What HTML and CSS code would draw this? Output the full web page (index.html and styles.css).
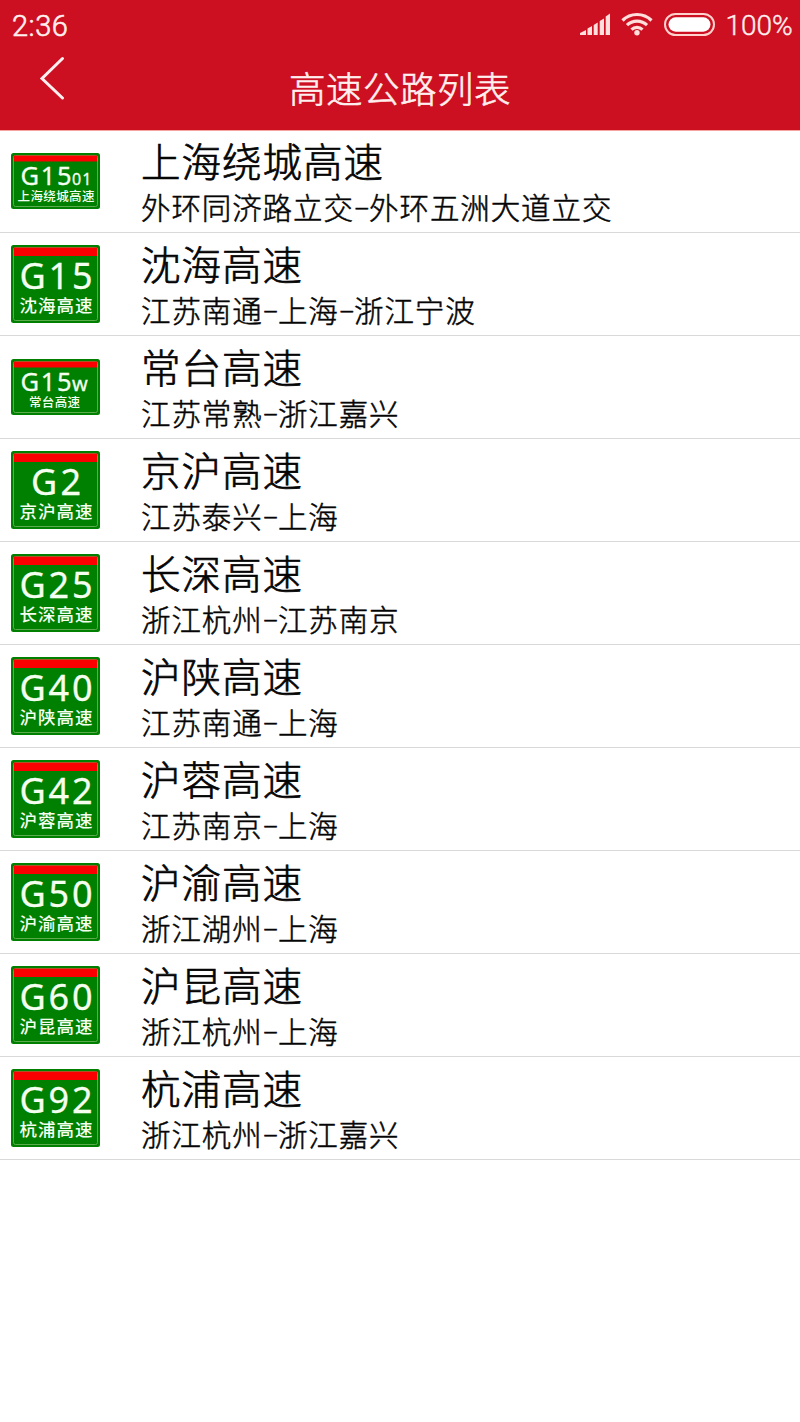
FILE: index.html
```
<!DOCTYPE html>
<html lang="zh-CN">
<head>
<meta charset="utf-8">
<title>高速公路列表</title>
<link rel="stylesheet" href="styles.css">
</head>
<body>
<header class="header">
  <div class="status">
    <span class="time">2:36</span>
    <svg class="signal" viewBox="0 0 30 22" width="30" height="22"><path d="M0 22v-2l6-3V22zM7.500 22v-6.500l4.500-2.500V22zM13.700 22V12l4-2.500V22zM19.700 22V8l4.300-2.500V22zM25.700 22V3.500L30 .5V22z"/></svg>
    <svg class="wifi" viewBox="0 0 32 24" width="32" height="24"><g class="arc"><path d="M1.500 8.500a20.500 20.500 0 0 1 29 0"/><path d="M6 13.200a14.100 14.100 0 0 1 20 0"/><path d="M10.500 17.700a7.800 7.800 0 0 1 11 0"/></g><circle cx="16" cy="20.700" r="2.700"/></svg>
    <svg class="battery" viewBox="0 0 51 23" width="51" height="23"><rect class="shell" x="1" y="1" width="49" height="21" rx="10.500"/><rect x="4.500" y="4.300" width="42" height="14.400" rx="7.200"/></svg>
    <span class="percent">100%</span>
  </div>
  <div class="nav">
    <svg class="back" viewBox="0 0 26 44" width="26" height="44"><path d="M23.500 2.500 3 22.500l20.500 19.500"/></svg>
    <h1 class="heading">高速公路列表</h1>
  </div>
</header>
<main class="list" id="list"></main>
<script src="app.js"></script>
</body>
</html>
```
FILE: styles.css
```
body {
  margin: 0;
  background: #fff;
  color: #050505;
  font-family: Roboto, "Noto Sans CJK SC", sans-serif;
}
.header {
  height: 131px;
  background: #cc1022;
  color: #fff0ef;
  border-bottom: 1px solid #f5a49f;
  box-sizing: border-box;
}
.status {
  display: flex;
  height: 50px;
  padding-left: 12px;
  font-family: Roboto, sans-serif;
  font-size: 29px;
  line-height: 52px;
}
.status svg {
  flex: none;
  fill: #ffdedb;
}
.time {
  width: 567.500px;
  font-weight: 300;
  letter-spacing: 0.500px;
  -webkit-text-stroke: 0.600px;
}
.signal { margin-top: 13px; }
.wifi { margin: 12px 0 0 11px; }
.wifi .arc { fill: none; stroke: #ffdedb; stroke-width: 3.200; }
.battery { margin: 13px 11px 0 11px; }
.status .battery { fill: #fff; }
.battery .shell { fill: none; stroke: #ffd2ce; stroke-width: 2; }
.percent {
  font-weight: 300;
  font-size: 28px;
  white-space: nowrap;
  -webkit-text-stroke: 0.400px;
}
.nav {
  display: grid;
  grid-template-columns: 80px 1fr 80px;
}
.back {
  margin: 6px 0 0 39px;
  fill: none;
  stroke: #fff0ef;
  stroke-width: 3;
  stroke-linecap: round;
}
.heading {
  margin: 0;
  font-family: "Noto Sans CJK SC", sans-serif;
  font-size: 36.500px;
  font-weight: 300;
  letter-spacing: 0.500px;
  line-height: 75px;
  text-align: center;
  -webkit-text-stroke: 0.600px;
}
.row {
  display: flex;
  align-items: center;
  height: 103px;
  box-sizing: border-box;
  border-bottom: 1px solid #d9d9d9;
  padding-left: 11px;
}
.row:first-child { height: 102px; }
.badge {
  flex: none;
  width: 89px;
  margin-right: 41px;
}
.row:first-child .badge { margin-bottom: 1px; }
.badge text {
  fill: #f4fff0;
  stroke: #f4fff0;
  stroke-width: 0.300;
  font-family: "Noto Sans", "Noto Sans CJK SC", sans-serif;
}
.badge .name {
  stroke: none;
  font-family: "Noto Sans CJK SC", sans-serif;
  font-weight: 500;
}
.plate { fill: #008000; }
.rim { fill: none; stroke: #5cab4f; }
.band { fill: #fb0000; }
.info {
  padding-bottom: 2px;
  font-family: "Noto Sans CJK SC", sans-serif;
  font-weight: 300;
  white-space: nowrap;
  -webkit-text-stroke: 0.500px;
}
.row:first-child .info { padding-bottom: 3px; }
.title {
  font-size: 39.500px;
  line-height: 53px;
  letter-spacing: 1px;
  -webkit-text-stroke: 0.700px;
}
.route {
  font-size: 29.500px;
  line-height: 41px;
  letter-spacing: 0.900px;
}
.dash {
  display: inline-block;
  width: 15.300px;
  font-family: Roboto, sans-serif;
  font-size: 25px;
  line-height: 1;
  letter-spacing: 0;
  text-align: center;
  vertical-align: 1px;
}
```
FILE: app.js
```
const roads = [
  ["G15", "01", "上海绕城高速", "外环同济路立交-外环五洲大道立交"],
  ["G15", "", "沈海高速", "江苏南通-上海-浙江宁波"],
  ["G15", "W", "常台高速", "江苏常熟-浙江嘉兴"],
  ["G2", "", "京沪高速", "江苏泰兴-上海"],
  ["G25", "", "长深高速", "浙江杭州-江苏南京"],
  ["G40", "", "沪陕高速", "江苏南通-上海"],
  ["G42", "", "沪蓉高速", "江苏南京-上海"],
  ["G50", "", "沪渝高速", "浙江湖州-上海"],
  ["G60", "", "沪昆高速", "浙江杭州-上海"],
  ["G92", "", "杭浦高速", "浙江杭州-浙江嘉兴"]
];

function badge(code, suffix, name) {
  const small = suffix !== "";
  const h = small ? 56 : 78;
  const band = small ? 6 : 8.5;
  const codeWidth = small ? 51 : code.length === 2 ? 50 : 73;
  const codeX = small ? 9.5 : (90 - codeWidth) / 2;
  const nameWidth = small ? (name.length === 6 ? 77 : 51) : 73;
  const nameX = small ? (name.length === 6 ? 6.5 : 18) : 8.5;
  const smallText = small
    ? `<text x="61" y="31.500" font-size="${suffix === "W" ? 20 : 16}" textLength="${suffix === "W" ? 16 : 19.5}">${suffix === "W" ? "w" : suffix}</text>` : "";
  return `<svg class="badge" viewBox="0 0 89 ${h}" height="${h}">
    <rect class="plate" width="89" height="${h}" rx="2.500"/>
    <rect class="rim" x="2.500" y="2.500" width="84" height="${h - 5}" rx="2"/>
    <rect class="band" x="3" y="2.500" width="83" height="${band}"/>
    <text x="${codeX}" y="${small ? 31.5 : 43.5}" font-size="${small ? 25.5 : 36}" textLength="${codeWidth}">${code}</text>${smallText}
    <text class="name" x="${nameX}" y="${small ? 47.5 : 66.5}" font-size="${small ? 12.5 : 17.5}" textLength="${nameWidth}">${name}</text>
  </svg>`;
}

document.getElementById("list").innerHTML = roads.map(([code, suffix, name, route]) =>
  `<section class="row">${badge(code, suffix, name)}<div class="info"><div class="title">${name}</div><div class="route">${route.replace(/-/g, '<span class="dash">–</span>')}</div></div></section>`
).join("");
```
